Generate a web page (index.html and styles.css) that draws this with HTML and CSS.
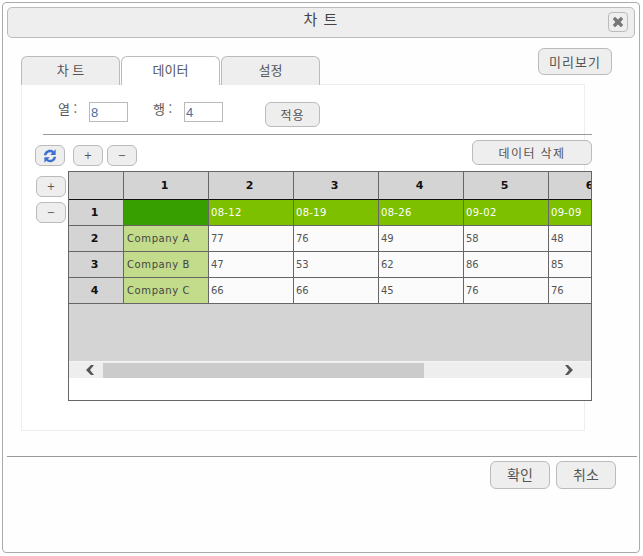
FILE: index.html
```html
<!DOCTYPE html>
<html lang="ko">
<head>
    <meta charset="UTF-8">
    <title>차트</title>
    <link rel="stylesheet" href="styles.css">
</head>
<body>

<div class="dialog">
    <div class="title-bar">
        <span class="title-text">차 트</span>
        <button class="close-btn" type="button" aria-label="닫기">
            <svg width="12" height="12" viewBox="0 0 12 12"><path d="M3 .8 6 3.4 9 .8 11.2 3 8.6 6 11.2 9 9 11.2 6 8.6 3 11.2.8 9 3.4 6 .8 3Z" fill="#777"/></svg>
        </button>
    </div>

    <div class="tab-row">
        <div class="tabs">
            <div class="tab">차 트</div>
            <div class="tab active">데이터</div>
            <div class="tab">설정</div>
        </div>
        <button class="btn preview-btn" type="button">미리보기</button>
    </div>

    <div class="panel">
        <div class="size-row">
            <label class="size-label col-label" for="cols">열 :</label>
            <input class="size-input" type="text" id="cols" value="8">
            <label class="size-label row-label" for="rows">행 :</label>
            <input class="size-input" type="text" id="rows" value="4">
            <button class="btn apply-btn" type="button">적용</button>
        </div>
        <div class="panel-line"></div>

        <div class="tool-row">
            <div class="tool-left">
                <button class="btn small-btn refresh-btn" type="button" aria-label="새로고침">
                    <svg width="18" height="18" viewBox="0 0 16 16" fill="#3b6fd0">
                        <path d="M2.6 7.4C2.9 4.6 5.2 2.5 8 2.5c1.3 0 2.4.4 3.3 1.2L13 2v5H8.2l1.8-1.8C9.5 4.8 8.8 4.6 8 4.6 6.4 4.6 5 5.8 4.8 7.4Z"/>
                        <path d="M13.4 8.6C13.1 11.4 10.8 13.5 8 13.5c-1.3 0-2.4-.4-3.3-1.2L3 14V9h4.8L6 10.8c.5.4 1.2.6 2 .6 1.6 0 3-1.2 3.2-2.8Z"/>
                    </svg>
                </button>
                <button class="btn small-btn add-col" type="button">+</button>
                <button class="btn small-btn" type="button">−</button>
            </div>
            <button class="btn delete-btn" type="button">데이터 삭제</button>
        </div>

        <div class="sheet-row">
            <div class="side-btns">
                <button class="btn small-btn" type="button">+</button>
                <button class="btn small-btn" type="button">−</button>
            </div>
            <div class="sheet">
                <div class="sheet-view">
                    <table class="sheet-table">
                        <thead>
                            <tr>
                                <th class="corner"></th>
                                <th>1</th><th>2</th><th>3</th><th>4</th><th>5</th><th>6</th>
                            </tr>
                        </thead>
                        <tbody>
                            <tr class="date-row">
                                <th>1</th>
                                <td class="name-head"></td>
                                <td>08-12</td><td>08-19</td><td>08-26</td><td>09-02</td><td>09-09</td>
                            </tr>
                            <tr>
                                <th>2</th>
                                <td class="name">Company A</td>
                                <td>77</td><td>76</td><td>49</td><td>58</td><td>48</td>
                            </tr>
                            <tr>
                                <th>3</th>
                                <td class="name">Company B</td>
                                <td>47</td><td>53</td><td>62</td><td>86</td><td>85</td>
                            </tr>
                            <tr>
                                <th>4</th>
                                <td class="name">Company C</td>
                                <td>66</td><td>66</td><td>45</td><td>76</td><td>76</td>
                            </tr>
                        </tbody>
                    </table>
                </div>
                <div class="scrollbar">
                    <svg class="arrow" width="10" height="12" viewBox="0 0 10 12"><path d="M6 1h3L5 6l4 5H6L1 6Z" fill="#555"/></svg>
                    <div class="thumb"></div>
                    <svg class="arrow arrow-right" width="10" height="12" viewBox="0 0 10 12"><path d="M4 1H1l4 5-4 5h3l5-5Z" fill="#555"/></svg>
                </div>
            </div>
        </div>
    </div>

    <div class="footer">
        <button class="btn foot-btn" type="button">확인</button>
        <button class="btn foot-btn" type="button">취소</button>
    </div>
</div>

</body>
</html>
```

FILE: styles.css
```css
* {
    box-sizing: border-box;
}

body {
    margin: 2px;
    background: white;
    font-family: "Noto Sans CJK KR", "DejaVu Sans", sans-serif;
    font-size: 12px;
    color: #555;
}

.dialog {
    width: 638px;
    height: 551px;
    border: 1px solid #aaa;
    border-radius: 4px;
    background: #fefefe;
    padding: 4px;
}

.title-bar {
    position: relative;
    height: 31px;
    background: #eee;
    border: 1px solid #bbb;
    border-radius: 5px;
    text-align: center;
    font-size: 15px;
    line-height: 22px;
    letter-spacing: 1px;
    color: #444;
}

.close-btn {
    position: absolute;
    top: 4px;
    right: 6px;
    width: 20px;
    height: 20px;
    padding: 0;
    background: #eee;
    border: 1px solid #bbb;
    border-radius: 4px;
    display: flex;
    align-items: center;
    justify-content: center;
}

.btn {
    background: #eee;
    border: 1px solid #bbb;
    border-radius: 6px;
    font-family: inherit;
    font-size: 12px;
    color: #555;
    padding: 0;
}

.tab-row {
    display: flex;
    justify-content: space-between;
    width: 591px;
    height: 37px;
    margin: 10px 0 0 14px;
}

.tabs {
    display: flex;
    gap: 1px;
    align-items: flex-end;
}

.tab {
    width: 99px;
    height: 29px;
    background: #eee;
    border: 1px solid #bbb;
    border-bottom: none;
    border-radius: 6px 6px 0 0;
    text-align: center;
    font-size: 13px;
    line-height: 26px;
}

.tab.active {
    background: white;
}

.preview-btn {
    width: 74px;
    height: 27px;
    font-size: 13px;
    letter-spacing: 1px;
}

.panel {
    width: 564px;
    height: 347px;
    margin-left: 14px;
    margin-top: -1px;
    border: 1px solid #eee;
    background: white;
    padding-top: 17px;
}

.size-row {
    display: flex;
    align-items: flex-start;
    height: 25px;
}

.size-label {
    font-size: 13px;
    line-height: 14px;
}

.col-label {
    margin: 0 10px 0 36px;
    width: 21px;
}

.row-label {
    margin: 0 10px 0 25px;
    width: 21px;
}

.size-input {
    width: 39px;
    height: 20px;
    border: 1px solid #bbb;
    padding: 1px 0 0 1px;
    font-family: "Liberation Sans", sans-serif;
    font-size: 13px;
    color: #4a6fa5;
    outline: none;
}

.apply-btn {
    width: 55px;
    height: 25px;
    margin-left: 42px;
    font-size: 12px;
    letter-spacing: 1px;
}

.panel-line {
    width: 549px;
    height: 1px;
    margin: 7px 0 0 21px;
    background: #999;
}

.tool-row {
    display: flex;
    justify-content: space-between;
    align-items: flex-start;
    width: 570px;
    margin: 5px 0 0;
    height: 25px;
}

.tool-left {
    display: flex;
    gap: 4px;
    margin: 5px 0 0 13px;
}

.small-btn {
    width: 30px;
    height: 21px;
    font-family: "DejaVu Sans", sans-serif;
    font-size: 10px;
    line-height: 17px;
    display: flex;
    align-items: center;
    justify-content: center;
}

.add-col {
    margin-left: 4px;
}

.delete-btn {
    width: 120px;
    height: 25px;
    letter-spacing: 1.4px;
}

.sheet-row {
    display: flex;
    gap: 2px;
    margin-top: 6px;
    margin-left: 14px;
}

.side-btns {
    display: flex;
    flex-direction: column;
    gap: 5px;
    margin-top: 5px;
}

.sheet {
    width: 524px;
    height: 230px;
    border: 1px solid #666;
    background: white;
}

.sheet-view {
    height: 189px;
    background: #d4d4d4;
    overflow: hidden;
}

.sheet-table {
    border-collapse: separate;
    border-spacing: 0;
    table-layout: fixed;
    width: 565px;
    font-family: "DejaVu Sans", sans-serif;
    font-size: 10px;
}

.sheet-table th,
.sheet-table td {
    width: 85px;
    height: 26px;
    padding: 0;
    border-right: 1px solid #666;
    border-bottom: 1px solid #666;
    white-space: nowrap;
}

.sheet-table th {
    background: #d4d4d4;
    padding-right: 3px;
    font-family: "DejaVu Sans", sans-serif;
    font-size: 11px;
    font-weight: bold;
    color: #111;
    text-align: center;
}

.sheet-table th.corner {
    width: 55px;
}

.sheet-table thead th {
    height: 28px;
    border-bottom-color: #111;
}

.sheet-table td {
    background: #fbfbfb;
    padding-left: 2px;
    padding-bottom: 1px;
    color: #555;
}

.sheet-table .date-row td {
    background: #7dc000;
    color: white;
    letter-spacing: 0.3px;
}

.sheet-table .date-row .name-head {
    background: #37a000;
}

.sheet-table .name {
    background: #c2dc8c;
    padding-left: 3px;
    letter-spacing: 0.6px;
    color: #444;
}

.scrollbar {
    display: flex;
    align-items: center;
    height: 17px;
    background: #eee;
    border-top: 1px solid #f4f4f4;
}

.arrow {
    margin-left: 16px;
}

.thumb {
    width: 321px;
    height: 15px;
    margin-left: 8px;
    background: #cbcbcb;
}

.arrow-right {
    margin-left: 140px;
}

.footer {
    display: flex;
    justify-content: flex-end;
    gap: 6px;
    width: 630px;
    height: 33px;
    margin-top: 25px;
    padding: 4px 21px 0 0;
    border-top: 1px solid #999;
}

.foot-btn {
    width: 60px;
    height: 28px;
    padding-bottom: 3px;
    font-size: 14px;
}
```
